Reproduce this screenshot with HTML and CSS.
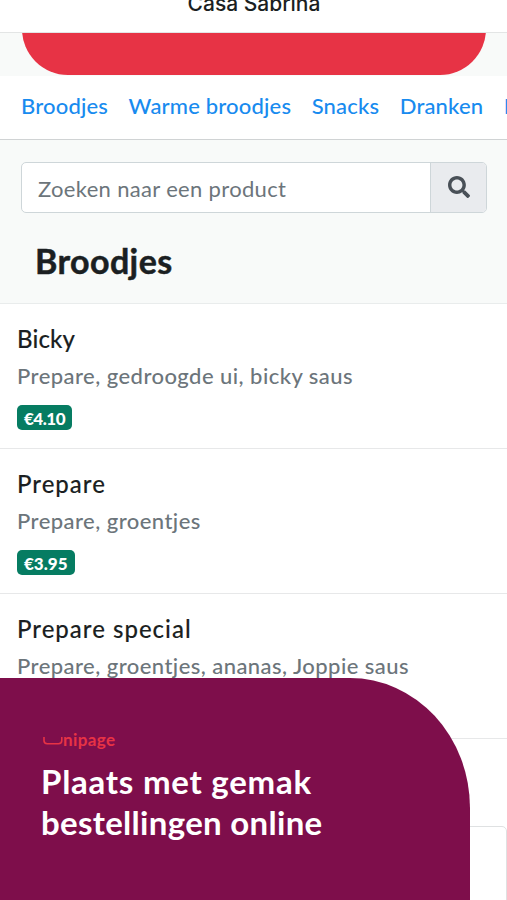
FILE: index.html
```
<!DOCTYPE html>
<html lang="nl">
<head>
<meta charset="UTF-8">
<meta name="viewport" content="width=device-width, initial-scale=1.0">
<title>Casa Sabrina</title>
<link rel="stylesheet" href="styles.css">
</head>
<body>
<header class="topbar"><span>Casa Sabrina</span></header>
<div class="hero"><div class="hero-card"></div></div>
<nav class="categories">
  <a>Broodjes</a>
  <a>Warme broodjes</a>
  <a>Snacks</a>
  <a>Dranken</a>
  <a>I</a>
</nav>
<section class="intro">
  <div class="search">
    <div class="search-field">Zoeken naar een product</div>
    <div class="search-button">
      <svg width="22" height="22" viewBox="0 0 512 512"><path fill="#495057" d="M505 442.700 405.300 343c-4.500-4.500-10.600-7-17-7H372c27.600-35.300 44-79.700 44-128C416 93.100 322.900 0 208 0S0 93.100 0 208s93.100 208 208 208c48.300 0 92.700-16.400 128-44v16.300c0 6.400 2.500 12.500 7 17l99.700 99.700c9.400 9.400 24.600 9.400 33.900 0l28.300-28.300c9.400-9.400 9.400-24.600.1-34zM208 336c-70.700 0-128-57.200-128-128 0-70.700 57.200-128 128-128 70.700 0 128 57.200 128 128 0 70.700-57.200 128-128 128z"/></svg>
    </div>
  </div>
  <h1>Broodjes</h1>
</section>
<main class="products">
  <article class="product">
    <h2 class="tight">Bicky</h2>
    <p>Prepare, gedroogde ui, bicky saus</p>
    <span class="price tight">€4.10</span>
  </article>
  <article class="product">
    <h2>Prepare</h2>
    <p>Prepare, groentjes</p>
    <span class="price">€3.95</span>
  </article>
  <article class="product">
    <h2>Prepare special</h2>
    <p>Prepare, groentjes, ananas, Joppie saus</p>
  </article>
</main>
<div class="order-box"></div>
<aside class="promo">
  <div class="logo">
    <svg width="20" height="10" viewBox="0 0 20 10"><path d="M1 1v3.500q0 3.200 3.200 3.200h11.300q3.300 0 3.300-3.200V1" fill="none" stroke="#e73345" stroke-width="1.600"/></svg>
    <span>nipage</span>
  </div>
  <p class="promo-title"><span class="wide">Plaats met gemak</span><br>bestellingen online</p>
</aside>
</body>
</html>
```
FILE: styles.css
```
* {
  box-sizing: border-box;
}

body {
  margin: 0;
  height: 900px;
  overflow: hidden;
  font-family: Lato, "Open Sans", sans-serif;
  background-color: #fff;
  color: #1b1f22;
}

h1, h2, p {
  margin: 0;
}

.topbar {
  display: flex;
  justify-content: center;
  height: 33px;
  padding-left: 1px;
  border-bottom: 1px solid #e3e5e5;
  font: 500 21px/26px Inter, sans-serif;
}

.topbar span {
  margin-top: -9px;
}

.hero {
  height: 43px;
  padding: 0 21px 0 22px;
  background-color: #f8faf9;
  overflow: hidden;
}

.hero-card {
  height: 92px;
  margin-top: -50px;
  border-radius: 50px;
  background-color: #e73345;
}

.categories {
  display: flex;
  gap: 20.500px;
  height: 64px;
  padding: 14px 0 0 21px;
  border-bottom: 1px solid #d0d3d4;
  font-size: 22px;
  font-weight: 500;
  line-height: 32px;
  letter-spacing: 0.18px;
  white-space: nowrap;
  color: #188bef;
  overflow: hidden;
}

.intro {
  height: 164px;
  padding: 22px 20px 0 21px;
  background-color: #f8faf9;
  border-bottom: 1px solid #e9ecec;
}

.search {
  display: flex;
  height: 51px;
  border: 1px solid #ced6d9;
  border-radius: 5px;
  background-color: #fff;
  overflow: hidden;
}

.search-field {
  flex: 1;
  padding-left: 16px;
  font-size: 22px;
  line-height: 52px;
  letter-spacing: 0.33px;
  color: #6c757b;
}

.search-button {
  display: flex;
  width: 56px;
  justify-content: center;
  padding-top: 13px;
  border-left: 1px solid #ced6d9;
  background-color: #e9ebee;
}

h1 {
  padding: 26px 0 0 14px;
  font-size: 34px;
  font-weight: 700;
  line-height: 44px;
  letter-spacing: 0.4px;
  -webkit-text-stroke: 0.5px;
}

.product {
  height: 145px;
  padding: 19px 17px 0;
  border-bottom: 1px solid #e7e8e9;
}

.product h2 {
  font-size: 24px;
  font-weight: 500;
  line-height: 32px;
  letter-spacing: 1px;
  -webkit-text-stroke: 0.1px;
}

.product h2.tight {
  letter-spacing: 0.1px;
}

.product p {
  margin-top: 5px;
  font-size: 22px;
  font-weight: 500;
  line-height: 32px;
  letter-spacing: 0.45px;
  color: #6c757b;
  white-space: nowrap;
}

.price {
  display: inline-block;
  height: 25px;
  margin-top: 13px;
  padding: 0 7px;
  border-radius: 5px;
  background-color: #067c62;
  color: #fff;
  font-size: 17px;
  font-weight: 900;
  line-height: 27px;
}

.price.tight {
  letter-spacing: -0.5px;
}

.order-box {
  height: 110px;
  margin-top: 87px;
  border: 1px solid #dfe1e2;
  border-radius: 5px;
}

/* purple banner lies over the product list */
.promo {
  position: absolute;
  left: 0;
  bottom: 0;
  width: 470px;
  height: 222px;
  padding: 52px 0 0 41px;
  border-top-right-radius: 120px 130px;
  background-color: #7e0e4b;
  color: #fff;
}

.logo {
  display: flex;
  height: 24px;
  padding-left: 2px;
  color: #e73345;
  font-size: 17px;
  font-weight: 700;
  line-height: 20px;
  letter-spacing: 0.4px;
}

.logo svg {
  margin-top: 6px;
}

.promo-title {
  margin-top: 7px;
  font-size: 33px;
  font-weight: 700;
  line-height: 41px;
  letter-spacing: 0.3px;
  white-space: nowrap;
}

.promo-title .wide {
  letter-spacing: 0.75px;
}
```
